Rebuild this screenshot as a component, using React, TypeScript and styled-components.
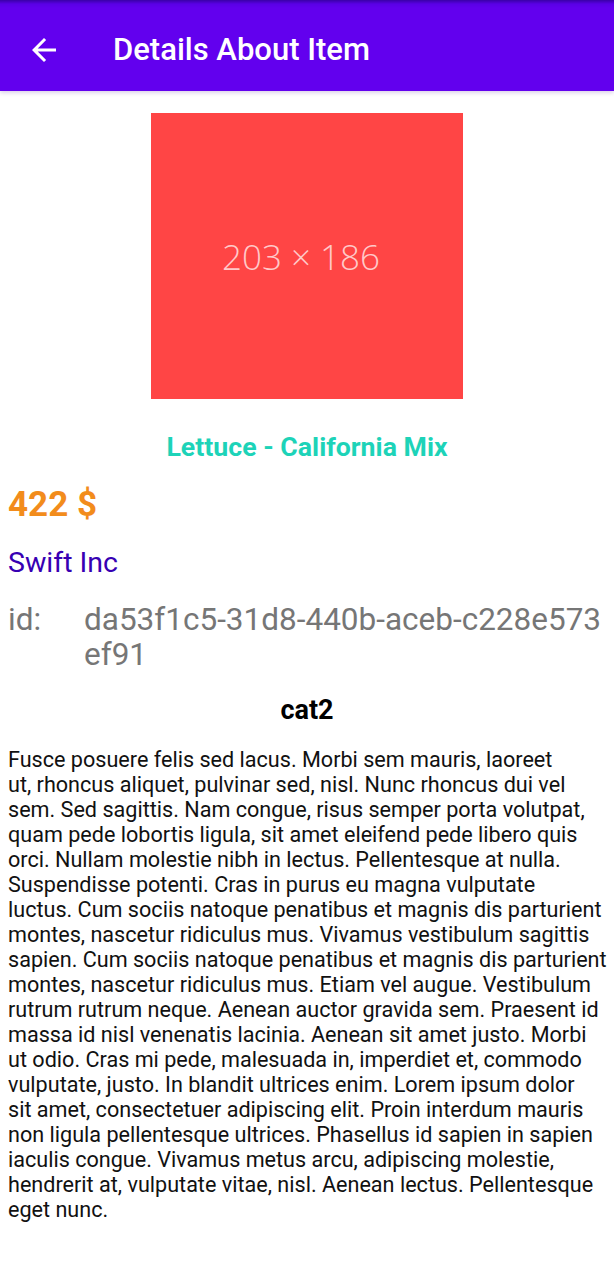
import React from "react";
import styled, { createGlobalStyle } from "styled-components";

const Global = createGlobalStyle`
  html, body { margin: 0; padding: 0; background: #ffffff; }
  body { font-family: Roboto, "Noto Sans", sans-serif; }
`;

const Page = styled.div`
  width: 614px;
  min-height: 1280px;
  background: #ffffff;
  display: flex;
  flex-direction: column;
`;

const AppBar = styled.header`
  height: 91px;
  background: linear-gradient(to bottom, #3a00a8 0px, #5a00e6 4px, #6200ee 8px);
  display: flex;
  align-items: center;
  padding-top: 9px;
  box-sizing: border-box;
  box-shadow: 0 2px 4px rgba(60, 0, 140, 0.18);
  position: relative;
  z-index: 1;
`;

const BackButton = styled.button`
  width: 36px;
  height: 36px;
  margin-left: 26px;
  padding: 0;
  border: none;
  background: transparent;
  display: flex;
  align-items: center;
  justify-content: center;
  color: #ffffff;
`;

const Title = styled.h1`
  margin: 0 0 0 51px;
  font-family: Roboto, sans-serif;
  font-weight: 500;
  font-size: 31px;
  line-height: 36px;
  color: #ffffff;
`;

const Content = styled.main`
  display: flex;
  flex-direction: column;
  padding: 22px 8px 40px;
`;

const Placeholder = styled.div`
  align-self: center;
  width: 312px;
  height: 286px;
  box-sizing: border-box;
  padding-right: 12px;
  background: #ff4545;
  display: flex;
  align-items: center;
  justify-content: center;
  color: #ffc9c9;
  font-family: "Open Sans", sans-serif;
  font-weight: 300;
  font-size: 35px;
`;

const ItemName = styled.h2`
  margin: 31px 0 0;
  text-align: center;
  color: #1dd3b8;
  font-family: Roboto, sans-serif;
  font-weight: 700;
  font-size: 26.7px;
  line-height: 34px;
`;

const Price = styled.div`
  margin-top: 21px;
  color: #f28c1c;
  font-family: Roboto, sans-serif;
  font-weight: 700;
  font-size: 35px;
  line-height: 40px;
`;

const Company = styled.div`
  margin-top: 20px;
  color: #3700b3;
  font-family: Roboto, sans-serif;
  font-size: 28.5px;
  line-height: 36px;
`;

const IdRow = styled.div`
  margin-top: 21px;
  display: flex;
  color: #767676;
  font-family: Roboto, sans-serif;
  font-size: 31.5px;
  line-height: 35px;
`;

const IdLabel = styled.span`
  width: 76px;
  flex-shrink: 0;
`;

const IdValue = styled.span`
  word-break: break-all;
  flex: 1;
`;

const Category = styled.h3`
  margin: 21px 0 0;
  text-align: center;
  font-family: Roboto, sans-serif;
  font-weight: 700;
  font-size: 27px;
  line-height: 34px;
  color: #000000;
`;

const Description = styled.p`
  margin: 20px 0 0;
  font-family: Roboto, sans-serif;
  font-size: 21.6px;
  line-height: 25px;
  color: #111111;
`;

const Line = styled.span`
  display: block;
  white-space: nowrap;
`;

const BackIcon = () => (
  <svg width="36" height="36" viewBox="0 0 24 24" fill="currentColor">
    <path d="M20 11H7.83l5.59-5.59L12 4l-8 8 8 8 1.41-1.41L7.83 13H20v-2z" />
  </svg>
);

const lines = [
  "Fusce posuere felis sed lacus. Morbi sem mauris, laoreet",
  "ut, rhoncus aliquet, pulvinar sed, nisl. Nunc rhoncus dui vel",
  "sem. Sed sagittis. Nam congue, risus semper porta volutpat,",
  "quam pede lobortis ligula, sit amet eleifend pede libero quis",
  "orci. Nullam molestie nibh in lectus. Pellentesque at nulla.",
  "Suspendisse potenti. Cras in purus eu magna vulputate",
  "luctus. Cum sociis natoque penatibus et magnis dis parturient",
  "montes, nascetur ridiculus mus. Vivamus vestibulum sagittis",
  "sapien. Cum sociis natoque penatibus et magnis dis parturient",
  "montes, nascetur ridiculus mus. Etiam vel augue. Vestibulum",
  "rutrum rutrum neque. Aenean auctor gravida sem. Praesent id",
  "massa id nisl venenatis lacinia. Aenean sit amet justo. Morbi",
  "ut odio. Cras mi pede, malesuada in, imperdiet et, commodo",
  "vulputate, justo. In blandit ultrices enim. Lorem ipsum dolor",
  "sit amet, consectetuer adipiscing elit. Proin interdum mauris",
  "non ligula pellentesque ultrices. Phasellus id sapien in sapien",
  "iaculis congue. Vivamus metus arcu, adipiscing molestie,",
  "hendrerit at, vulputate vitae, nisl. Aenean lectus. Pellentesque",
  "eget nunc.",
];

export default function App() {
  return (
    <Page>
      <Global />
      <AppBar>
        <BackButton aria-label="Back">
          <BackIcon />
        </BackButton>
        <Title>Details About Item</Title>
      </AppBar>
      <Content>
        <Placeholder>203 × 186</Placeholder>
        <ItemName>Lettuce - California Mix</ItemName>
        <Price>422 $</Price>
        <Company>Swift Inc</Company>
        <IdRow>
          <IdLabel>id:</IdLabel>
          <IdValue>da53f1c5-31d8-440b-aceb-c228e573ef91</IdValue>
        </IdRow>
        <Category>cat2</Category>
        <Description>
          {lines.map((l, i) => (
            <Line key={i}>{l}</Line>
          ))}
        </Description>
      </Content>
    </Page>
  );
}
